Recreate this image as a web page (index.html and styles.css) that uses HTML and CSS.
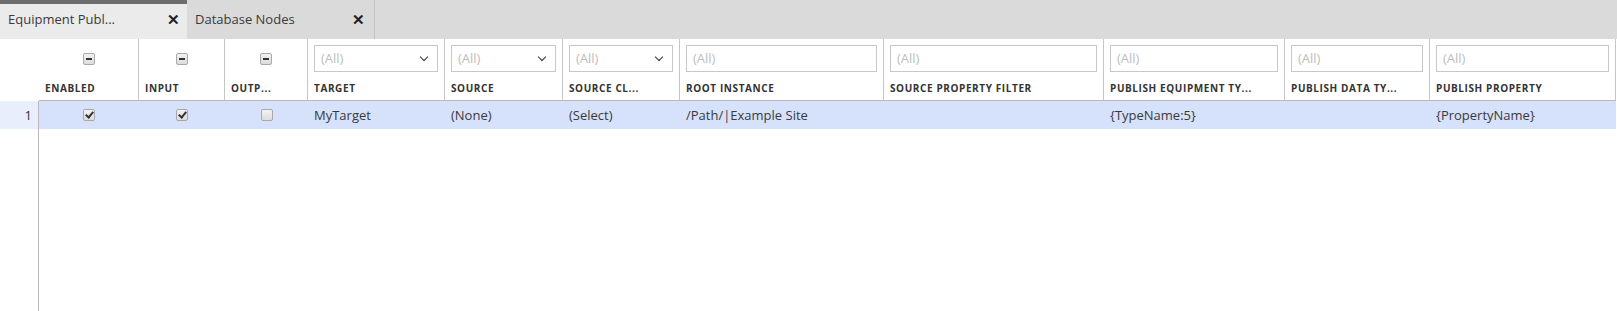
FILE: index.html
```html
<!DOCTYPE html>
<html lang="en">
<head>
    <meta charset="UTF-8">
    <title>Equipment Publishing</title>
    <link rel="stylesheet" href="styles.css">
</head>
<body>
    <div class="tabs">
        <div class="tab active">
            <span class="tab-title">Equipment Publ...</span>
            <span class="tab-close">&#x2715;</span>
        </div>
        <div class="tab">
            <span class="tab-title">Database Nodes</span>
            <span class="tab-close">&#x2715;</span>
        </div>
    </div>

    <div class="grid">
        <!-- header -->
        <div class="hcell rownum-head"></div>
        <div class="hcell">
            <div class="filter center"><span class="cb dash"></span></div>
            <div class="label">ENABLED</div>
        </div>
        <div class="hcell">
            <div class="filter center"><span class="cb dash"></span></div>
            <div class="label">INPUT</div>
        </div>
        <div class="hcell">
            <div class="filter center"><span class="cb dash"></span></div>
            <div class="label">OUTP...</div>
        </div>
        <div class="hcell">
            <div class="filter"><div class="box select">(All)<span class="chev"></span></div></div>
            <div class="label">TARGET</div>
        </div>
        <div class="hcell">
            <div class="filter"><div class="box select">(All)<span class="chev"></span></div></div>
            <div class="label">SOURCE</div>
        </div>
        <div class="hcell">
            <div class="filter"><div class="box select">(All)<span class="chev"></span></div></div>
            <div class="label">SOURCE CL...</div>
        </div>
        <div class="hcell">
            <div class="filter"><div class="box">(All)</div></div>
            <div class="label">ROOT INSTANCE</div>
        </div>
        <div class="hcell">
            <div class="filter"><div class="box">(All)</div></div>
            <div class="label">SOURCE PROPERTY FILTER</div>
        </div>
        <div class="hcell">
            <div class="filter"><div class="box">(All)</div></div>
            <div class="label">PUBLISH EQUIPMENT TY...</div>
        </div>
        <div class="hcell">
            <div class="filter"><div class="box">(All)</div></div>
            <div class="label">PUBLISH DATA TY...</div>
        </div>
        <div class="hcell">
            <div class="filter"><div class="box">(All)</div></div>
            <div class="label">PUBLISH PROPERTY</div>
        </div>

        <!-- row 1 -->
        <div class="rownum">1</div>
        <div class="cell center"><span class="cb checked"></span></div>
        <div class="cell center"><span class="cb checked"></span></div>
        <div class="cell center"><span class="cb"></span></div>
        <div class="cell">MyTarget</div>
        <div class="cell">(None)</div>
        <div class="cell">(Select)</div>
        <div class="cell">/Path/|Example Site</div>
        <div class="cell"></div>
        <div class="cell">{TypeName:5}</div>
        <div class="cell"></div>
        <div class="cell">{PropertyName}</div>

        <!-- empty area -->
        <div class="empty-num"></div>
        <div class="empty"></div>
    </div>
</body>
</html>
```

FILE: styles.css
```css
body {
    margin: 0;
    font-family: "Open Sans", "Noto Sans", sans-serif;
    color: #333;
    background: #fff;
    height: 311px;
    display: flex;
    flex-direction: column;
}
.tabs {
    display: flex;
    height: 39px;
    background: #dadada;
}
.tab {
    width: 188px;
    box-sizing: border-box;
    display: flex;
    align-items: center;
    justify-content: space-between;
    padding: 0 9px 2px 8px;
    border-right: 1px solid #c4c4c4;
    font-size: 13px;
    color: #3a3a3a;
}
.tab.active {
    width: 187px;
    background: #ebebeb;
    border-top: 4px solid #6e6e6e;
    border-right: none;
    padding-bottom: 6px;
    padding-right: 7px;
}
.tab-close {
    font-size: 15px;
    font-weight: bold;
    color: #1f1f1f;
}
.grid {
    flex: 1;
    display: grid;
    grid-template-columns: 39px 100px 86px 83px 137px 118px 117px 204px 220px 181px 145px 186px;
    grid-template-rows: 62px 28px 1fr;
}
.hcell {
    border-right: 1px solid #c6c6c6;
    border-bottom: 1px solid #b8b8b8;
    display: flex;
    flex-direction: column;
}
.rownum-head {
    border-right: none;
    border-bottom: none;
}
.filter {
    height: 39px;
    padding: 6px 6px 0 6px;
    box-sizing: border-box;
}
.filter.center {
    display: flex;
    justify-content: center;
    padding-top: 14px;
}
.box {
    height: 27px;
    box-sizing: border-box;
    border: 1px solid #c8c8c8;
    padding: 0 6px;
    font-size: 13px;
    line-height: 25px;
    color: #bdbdbd;
    display: flex;
    justify-content: space-between;
    align-items: center;
}
.chev {
    width: 5px;
    height: 5px;
    border-right: 1.5px solid #333;
    border-bottom: 1.5px solid #333;
    transform: rotate(45deg);
    margin: 0 4px 4px 0;
}
.label {
    padding: 3px 6px 0 6px;
    font-size: 10px;
    font-weight: 700;
    letter-spacing: 0.6px;
    color: #333;
    white-space: nowrap;
}
.rownum {
    background: #e8eefc;
    border-right: 1px solid #b8b8b8;
    text-align: right;
    padding-right: 6px;
    font-size: 13px;
    line-height: 28px;
}
.cell {
    background: #d6e1fb;
    font-size: 13px;
    line-height: 28px;
    padding-left: 6px;
    color: #3a3a3a;
    white-space: nowrap;
}
.cell.center {
    display: flex;
    justify-content: center;
    align-items: center;
    padding-left: 0;
}
.cb {
    width: 12px;
    height: 12px;
    box-sizing: border-box;
    border: 1px solid #a9a9a9;
    border-radius: 2px;
    background: linear-gradient(#f2f2f2, #dcdcdc);
    display: flex;
    align-items: center;
    justify-content: center;
}
.cb.dash::after {
    content: "";
    width: 6px;
    height: 2px;
    background: #333;
}
.cb.checked::after {
    content: "";
    width: 3px;
    height: 6px;
    border-right: 2px solid #333;
    border-bottom: 2px solid #333;
    transform: rotate(40deg);
    margin-top: -2px;
}
.empty-num {
    border-right: 1px solid #b8b8b8;
}
.empty {
    grid-column: 2 / -1;
}
```
